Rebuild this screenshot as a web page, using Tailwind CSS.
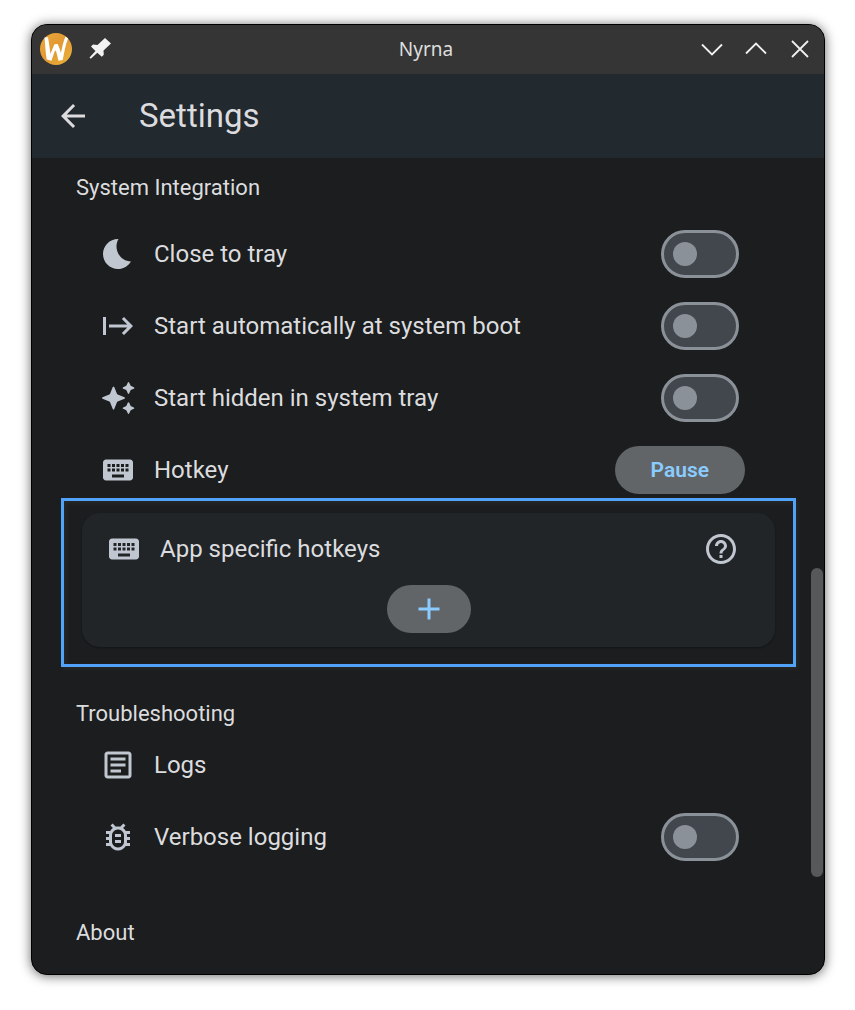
<!DOCTYPE html>
<html lang="en">
<head>
<meta charset="utf-8">
<meta name="viewport" content="width=device-width, initial-scale=1">
<title>Nyrna</title>
<script src="https://cdn.jsdelivr.net/npm/@tailwindcss/browser@4"></script>
</head>
<body class="flex min-h-screen bg-white pt-[24px] pr-[30px] pb-[35px] pl-[31px] font-['Roboto',sans-serif] text-[#dcdcdf]">
<svg class="hidden" aria-hidden="true">
  <symbol id="keyboard" viewBox="0 0 24 24"><path d="M20 5H4c-1.1 0-1.99.9-1.99 2L2 17c0 1.1.9 2 2 2h16c1.1 0 2-.9 2-2V7c0-1.1-.9-2-2-2zm-9 3h2v2h-2V8zm0 3h2v2h-2v-2zM8 8h2v2H8V8zm0 3h2v2H8v-2zm-1 2H5v-2h2v2zm0-3H5V8h2v2zm9 7H8v-2h8v2zm0-4h-2v-2h2v2zm0-3h-2V8h2v2zm3 3h-2v-2h2v2zm0-3h-2V8h2v2z"/></symbol>
</svg>
<div class="relative flex flex-1 flex-col overflow-hidden rounded-2xl border border-black bg-[#1b1d1e] shadow-[0_1px_12px_rgba(0,0,0,0.6)]">
  <header class="grid h-[49px] grid-cols-[1fr_auto_1fr] items-center bg-[#353535] pr-3 pb-0.5 pl-2">
    <div class="flex items-center gap-3">
      <svg class="size-8" viewBox="0 0 32 32" role="img" aria-label="Wayland">
        <defs><linearGradient id="gold" x1="0" y1="0" x2="1" y2="1"><stop offset="0" stop-color="#e9a63a"/><stop offset=".5" stop-color="#e29a33"/><stop offset="1" stop-color="#eab43a"/></linearGradient></defs>
        <circle cx="16" cy="16" r="16" fill="url(#gold)"/>
        <path fill="#fff" d="M4.500 4.500c.8 8 1 15 2.200 22l4.800 1.200 3.300-9.700 1.200-.2 2.500 9.900 4.200-.7c1.600-7 2.600-15 5.400-21.500l-2.600-2c-2.600 5.500-3.200 11-4.600 16.600-1-3.600-1.800-6-3.200-9.100l-3.200.2c-1.400 3-2.500 6-4 9.500-1-6-1.500-11-2.500-16.500z"/>
      </svg>
      <button class="size-8" type="button" aria-label="Keep on top">
        <svg class="size-full" viewBox="0 0 32 32" fill="#f2f2f2"><path d="M21 5l6 5.500-7.500 7 .3 4.300-2 2-4.500-4-6.500 6-1.300-1.300 6-6.500-4.500-4.500 2-2 4.500.5z"/></svg>
      </button>
    </div>
    <h1 class="font-['Noto_Sans',sans-serif] text-[19px] leading-6 text-[#dedede]">Nyrna</h1>
    <div class="flex justify-end gap-5">
      <button class="size-6" type="button" aria-label="Minimize"><svg class="size-full" viewBox="0 0 24 24" fill="none" stroke="#f0f0f0" stroke-width="1.800"><path d="M2 7.500l10 10 10-10"/></svg></button>
      <button class="size-6" type="button" aria-label="Maximize"><svg class="size-full" viewBox="0 0 24 24" fill="none" stroke="#f0f0f0" stroke-width="1.800"><path d="M2 16.500l10-10 10 10"/></svg></button>
      <button class="size-6" type="button" aria-label="Close"><svg class="size-full" viewBox="0 0 24 24" fill="none" stroke="#f0f0f0" stroke-width="1.800"><path d="M4 4l16 16M20 4L4 20"/></svg></button>
    </div>
  </header>
  <div class="flex h-[84px] items-center gap-12 bg-[#22292f] pl-[23px]">
    <button class="size-9" type="button" aria-label="Back"><svg class="size-full" viewBox="0 0 24 24" fill="currentColor"><path d="M20 11H7.830l5.590-5.590L12 4l-8 8 8 8 1.410-1.410L7.830 13H20v-2z"/></svg></button>
    <h2 class="text-[33px] leading-10">Settings</h2>
  </div>
  <main class="flex-1 pt-[15px]">
    <section>
      <h3 class="mb-[15px] pl-11 text-[22px] leading-[30px]">System Integration</h3>
      <label class="flex h-18 items-center gap-[18px] pr-[85px] pl-[68px] text-2xl">
        <svg class="size-9 fill-[#c1c7d0]" viewBox="0 0 24 24"><path d="M12.340 2.020C6.590 1.820 2 6.420 2 12c0 5.520 4.480 10 10 10 3.710 0 6.930-2.020 8.660-5.020-7.510-.25-12.090-8.430-8.320-14.960z"/></svg>
        <span class="flex-1">Close to tray</span>
        <input type="checkbox" role="switch" class="h-12 w-[78px] appearance-none rounded-full border-3 border-[#8b9198] bg-[#42474e] pl-[9px] before:mt-[9px] before:block before:size-6 before:rounded-full before:bg-[#8b9198] checked:pl-[39px]">
      </label>
      <label class="flex h-18 items-center gap-[18px] pr-[85px] pl-[68px] text-2xl">
        <svg class="size-9 fill-[#c1c7d0]" viewBox="0 0 24 24"><path d="M14.590 7.410L18.170 11H6v2h12.170l-3.590 3.590L16 18l6-6-6-6-1.410 1.410zM2 6v12h2V6H2z"/></svg>
        <span class="flex-1">Start automatically at system boot</span>
        <input type="checkbox" role="switch" class="h-12 w-[78px] appearance-none rounded-full border-3 border-[#8b9198] bg-[#42474e] pl-[9px] before:mt-[9px] before:block before:size-6 before:rounded-full before:bg-[#8b9198] checked:pl-[39px]">
      </label>
      <label class="flex h-18 items-center gap-[18px] pr-[85px] pl-[68px] text-2xl">
        <svg class="size-9 fill-[#c1c7d0]" viewBox="0 0 24 24"><path d="M19.500 8.800l.8-1.750q.15-.35.5-.5l1.750-.8q.9-.45 0-.9l-1.750-.8q-.35-.15-.5-.5l-.8-1.750q-.5-.9-1 0l-.8 1.750q-.15.35-.5.5l-1.750.8q-.9.45 0 .9l1.750.8q.35.150.5.5l.8 1.750q.5.9 1 0zM11.300 9.200L9.500 4.700q-.5-.9-1 0L6.700 9.200q-.15.35-.5.5L1.700 11.500q-.9.500 0 1l4.500 1.800q.35.150.5.500l1.800 4.500q.5.900 1 0l1.800-4.500q.15-.35.5-.5l4.500-1.800q.9-.5 0-1l-4.500-1.800q-.35-.15-.5-.5zM18.500 15.200l-.8 1.750q-.15.35-.5.500l-1.750.8q-.9.450 0 .9l1.750.8q.35.150.5.500l.8 1.750q.5.900 1 0l.8-1.750q.15-.35.5-.5l1.750-.8q.9-.45 0-.9l-1.750-.8q-.35-.15-.5-.5l-.8-1.750q-.5-.9-1 0z"/></svg>
        <span class="flex-1">Start hidden in system tray</span>
        <input type="checkbox" role="switch" class="h-12 w-[78px] appearance-none rounded-full border-3 border-[#8b9198] bg-[#42474e] pl-[9px] before:mt-[9px] before:block before:size-6 before:rounded-full before:bg-[#8b9198] checked:pl-[39px]">
      </label>
      <div class="flex h-18 items-center gap-[18px] pr-[79px] pl-[68px] text-2xl">
        <svg class="size-9 fill-[#c1c7d0]"><use href="#keyboard"/></svg>
        <span class="flex-1">Hotkey</span>
        <button type="button" class="h-12 rounded-full bg-[#626567] px-9 text-[21px] font-semibold text-[#8accff]">Pause</button>
      </div>
      <div class="relative mt-[7px] mr-[49px] ml-[50px] rounded-[18px] bg-[#212528] pb-3.5 shadow-[0_1px_2px_rgba(0,0,0,0.3)]">
        <div class="pointer-events-none absolute -inset-x-[21px] -top-[15px] -bottom-5 border-3 border-[#51a2f9] shadow-[2px_2px_4px_rgba(60,60,60,0.4),inset_2px_2px_4px_rgba(60,60,60,0.4)]"></div>
        <div class="flex h-18 items-center gap-[18px] pr-9 pl-6 text-2xl">
          <svg class="size-9 fill-[#c1c7d0]"><use href="#keyboard"/></svg>
          <span class="flex-1">App specific hotkeys</span>
          <button class="size-9" type="button" aria-label="Help"><svg class="size-full fill-[#c1c7d0]" viewBox="0 0 24 24"><path d="M11 18h2v-2h-2v2zm1-16C6.480 2 2 6.480 2 12s4.480 10 10 10 10-4.480 10-10S17.520 2 12 2zm0 18c-4.410 0-8-3.590-8-8s3.590-8 8-8 8 3.590 8 8-3.590 8-8 8zm0-14c-2.210 0-4 1.790-4 4h2c0-1.100.9-2 2-2s2 .9 2 2c0 2-3 1.750-3 5h2c0-2.250 3-2.500 3-5 0-2.210-1.790-4-4-4z"/></svg></button>
        </div>
        <button type="button" aria-label="Add hotkey" class="mx-auto flex h-12 w-21 items-center justify-center rounded-full bg-[#626567]"><svg class="size-9 fill-[#8accff]" viewBox="0 0 24 24"><path d="M19 13h-6v6h-2v-6H5v-2h6V5h2v6h6v2z"/></svg></button>
      </div>
    </section>
    <section class="mt-[52px]">
      <h3 class="pl-11 text-[22px] leading-[30px]">Troubleshooting</h3>
      <a href="#logs" class="flex h-18 items-center gap-[18px] pr-[85px] pl-[68px] text-2xl">
        <svg class="size-9 fill-[#c1c7d0]" viewBox="0 0 24 24"><path d="M19 5v14H5V5h14m0-2H5c-1.100 0-2 .9-2 2v14c0 1.100.9 2 2 2h14c1.100 0 2-.9 2-2V5c0-1.100-.9-2-2-2zM14 17H7v-2h7v2zm3-4H7v-2h10v2zm0-4H7V7h10v2z"/></svg>
        <span>Logs</span>
      </a>
      <label class="flex h-18 items-center gap-[18px] pr-[85px] pl-[68px] text-2xl">
        <svg class="size-9 fill-[#c1c7d0]" viewBox="0 0 24 24"><path d="M20 8h-2.810c-.45-.78-1.070-1.450-1.820-1.960L17 4.410 15.590 3l-2.170 2.170C12.960 5.060 12.490 5 12 5s-.96.06-1.410.17L8.410 3 7 4.410l1.620 1.630C7.880 6.550 7.260 7.220 6.810 8H4v2h2.090c-.05.33-.09.66-.09 1v1H4v2h2v1c0 .34.04.67.09 1H4v2h2.810c1.040 1.790 2.970 3 5.190 3s4.150-1.210 5.190-3H20v-2h-2.090c.05-.33.09-.66.09-1v-1h2v-2h-2v-1c0-.34-.04-.67-.09-1H20V8zm-4 4v3c0 .22-.03.47-.07.7l-.1.65-.37.65c-.72 1.240-2.040 2-3.460 2s-2.740-.77-3.460-2l-.37-.64-.1-.65C8.030 15.480 8 15.230 8 15v-4c0-.23.03-.48.07-.7l.1-.65.37-.65c.3-.52.72-.97 1.210-1.310l.57-.39.74-.18c.31-.08.63-.12.94-.12.32 0 .63.04.95.12l.68.16.61.42c.5.34.91.78 1.210 1.310l.38.65.1.65c.04.22.07.47.07.69v1zm-6 2h4v2h-4zm0-4h4v2h-4z"/></svg>
        <span class="flex-1">Verbose logging</span>
        <input type="checkbox" role="switch" class="h-12 w-[78px] appearance-none rounded-full border-3 border-[#8b9198] bg-[#42474e] pl-[9px] before:mt-[9px] before:block before:size-6 before:rounded-full before:bg-[#8b9198] checked:pl-[39px]">
      </label>
    </section>
    <section class="mt-[45px]">
      <h3 class="pl-11 text-[22px] leading-[30px]">About</h3>
    </section>
  </main>
  <div class="absolute top-[543px] right-px h-[309px] w-3 rounded-full bg-[#575859]"></div>
</div>
</body>
</html>
